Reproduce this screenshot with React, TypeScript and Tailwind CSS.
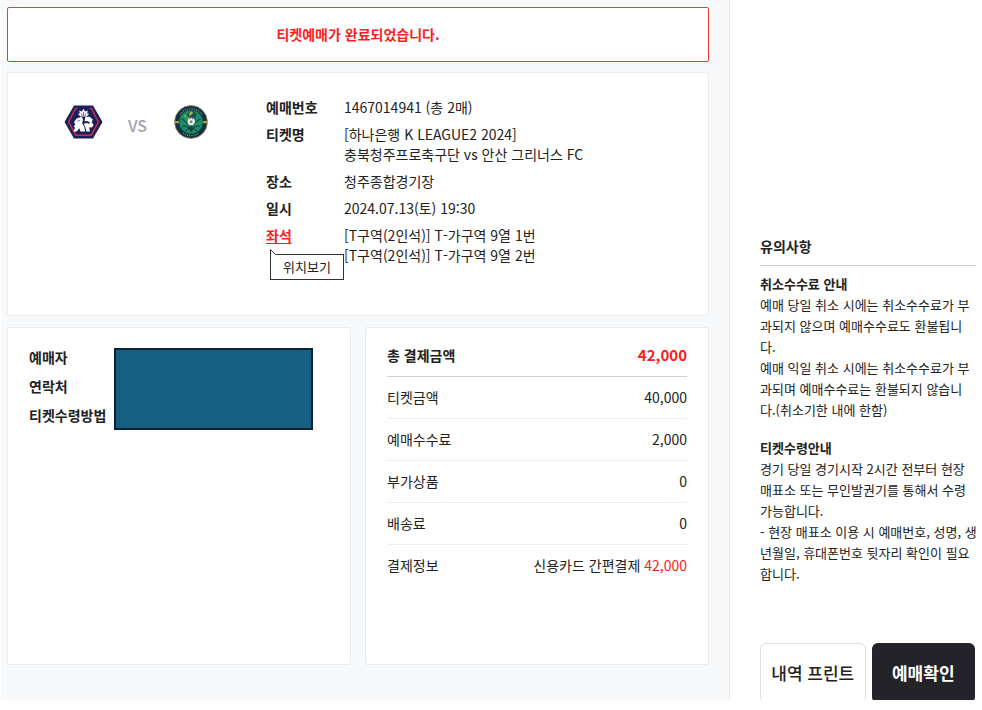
import React from 'react';

const bookingInfo = [
  { label: '예매번호', lines: ['1467014941 (총 2매)'] },
  { label: '티켓명', lines: ['[하나은행 K LEAGUE2 2024]', '충북청주프로축구단 vs 안산 그리너스 FC'] },
  { label: '장소', lines: ['청주종합경기장'] },
  { label: '일시', lines: ['2024.07.13(토) 19:30'] },
];

const seats = ['[T구역(2인석)] T-가구역 9열 1번', '[T구역(2인석)] T-가구역 9열 2번'];

const payments = [
  { label: '티켓금액', value: '40,000' },
  { label: '예매수수료', value: '2,000' },
  { label: '부가상품', value: '0' },
  { label: '배송료', value: '0' },
];

const HomeLogo: React.FC = () => (
  <svg className="h-[34px] w-[39px]" viewBox="0 0 39 34" aria-hidden="true">
    <path d="M10 0.5h19l9.500 16.5L29 33.5H10L0.500 17z" fill="#1b2059" />
    <path d="M13.5 3.5h-1.8L4.600 17l7.200 13.200h15.400L34.400 17 27.300 3.500h-1.800" fill="none" stroke="#c4304c" strokeWidth="1.5" />
    {/* crest */}
    <path
      d="M19.500 3.800l1.600 2.800 2.700-1-.6 3 2 .2-2.600 2.600h-6.200l-2.600-2.600 2-.2-.6-3 2.700 1z"
      fill="#f4f5fa"
    />
    {/* left and right heads */}
    <path
      d="M17.800 11.800l1.200 2.600-.8 4.200 2 3.200 1 4.700h-4.600l-1.400-3.300-2.600 3.300H9.400l1.600-3.700-1.200-1.300 1.600-2-1.400-2.300 2.600-3.600z"
      fill="#fff"
    />
    <path
      d="M21.400 11.800h4.200l3.400 3-1.400 1.900 2 3.500-1.800 2.300-2.600-.2.7 4.200h-3.400l-1.200-4.200-1.700-3.600 3.400-.7 2.200 1 .6-1.700-2.700-1.400-2.600.3z"
      fill="#fff"
    />
    <path d="M19.500 7v4M17.200 8.500l1 2.400M21.800 8.500l-1 2.400M13.200 16.200l2.600-.8" fill="none" stroke="#1b2059" strokeWidth="0.6" />
  </svg>
);

const AwayLogo: React.FC = () => (
  <svg className="h-[34px] w-[34px]" viewBox="0 0 34 34" aria-hidden="true">
    <circle cx="17" cy="17" r="16.4" fill="#122f45" stroke="#8f8a52" strokeWidth="0.8" />
    <path d="M6 9.500a13.500 13.500 0 0 1 22 0M9 28a13.500 13.500 0 0 0 16 0" fill="none" stroke="#6f8770" strokeWidth="1.4" strokeDasharray="1.200 1" />
    <path d="M0.800 16h4.500v2.200h-4.500zM28.700 16h4.500v2.200h-4.500z" fill="#b7a33c" />
    <circle cx="17" cy="17" r="11.800" fill="#1b9066" stroke="#1d5a4b" strokeWidth="0.700" />
    <path
      d="M7.500 14c2.500 0 3.500 3.500 6 4.500M26.500 14c-2.500 0-3.500 3.500-6 4.500M8 21.500c3-1.500 4.500 0 7 1.500M26 21.500c-3-1.500-4.500 0-7 1.500M11.500 26l4-3.500M22.500 26l-4-3.500"
      fill="none"
      stroke="#14524d"
      strokeWidth="1.300"
    />
    <path d="M13 10l2.500-3.500 4-.5 3 3-1 4.500h-7.500z" fill="#175350" />
    <path d="M15.500 7.500l2-1.200 1.500 1.200-1.200 2.200-2.800 1zM11 9.500l1.500 1-1 2.200-1.300-1.200zM12.500 15.500l1-3 2-1-1 2.500z" fill="#c0a83e" />
    <circle cx="17.200" cy="16.500" r="4.200" fill="#e9f1ec" stroke="#17444b" strokeWidth="0.800" />
    <path d="M17.200 15.200l1.500 1.100-.6 1.700h-1.800l-.6-1.700zM15 13.400l1.200-.5.6.8-1 .7zM19.300 13.400l-1.200-.5-.6.8 1 .7z" fill="#6d8084" />
    <path d="M15.500 21.500h3.200l.5 3-2.100 3-2.100-3z" fill="#143f49" />
  </svg>
);

const BookingCard: React.FC = () => (
  <section className="flex min-h-[244px] rounded-xs border border-[#eaecee] bg-white pt-6 pb-8">
    <div className="flex w-[258px] shrink-0 items-start pt-2 pl-14">
      <HomeLogo />
      <span className="mt-[10px] ml-[25px] text-base leading-5 font-medium text-[#9ea3ad]">VS</span>
      <div className="ml-[27px]">
        <AwayLogo />
      </div>
    </div>
    <dl className="flex min-w-0 flex-1 flex-col gap-[7px] leading-5">
      {bookingInfo.map((item) => (
        <div key={item.label} className="flex">
          <dt className="w-[78px] shrink-0 font-bold">{item.label}</dt>
          <dd>
            {item.lines.map((line) => (
              <p key={line}>{line}</p>
            ))}
          </dd>
        </div>
      ))}
      <div className="flex">
        <dt className="relative w-[78px] shrink-0 font-bold">
          <a href="#seat" className="text-[#fb1d22] underline underline-offset-2">좌석</a>
          <div className="absolute top-6 left-1 z-10">
            <svg className="relative z-10 block h-[6px] w-[7px]" viewBox="0 0 7 6" aria-hidden="true">
              <path d="M0 0v6h7z" fill="#fff" />
              <path d="M0.500 6V0.500L6 6" fill="none" stroke="#333" />
            </svg>
            <a
              href="#location"
              className="-mt-px block border border-[#333] bg-white px-3 py-[2px] text-[13px] leading-5 font-normal whitespace-nowrap"
            >
              위치보기
            </a>
          </div>
        </dt>
        <dd>
          {seats.map((seat) => (
            <p key={seat}>{seat}</p>
          ))}
        </dd>
      </div>
    </dl>
  </section>
);

const BuyerCard: React.FC = () => (
  <section className="flex min-h-[338px] flex-1 items-start rounded-xs border border-[#eaecee] bg-white px-[21px] pt-5">
    <ul className="-mt-[5px] w-[80px] shrink-0 leading-[29px] font-bold whitespace-nowrap">
      <li>예매자</li>
      <li>연락처</li>
      <li>티켓수령방법</li>
    </ul>
    <div className="ml-[5px] h-[82px] w-[199px] border-2 border-[#042433] bg-[#156082]" />
  </section>
);

const PaymentCard: React.FC = () => (
  <section className="min-h-[338px] flex-1 rounded-xs border border-[#eaecee] bg-white px-[21px] pt-[6px]">
    <table className="w-full border-collapse">
      <thead>
        <tr className="h-[42px] border-b border-[#cfd1d6]">
          <th scope="row" className="text-left font-bold">총 결제금액</th>
          <td className="text-right text-[15px] font-bold text-[#fb1d22]">42,000</td>
        </tr>
      </thead>
      <tbody>
        {payments.map((item) => (
          <tr key={item.label} className="h-[42px] border-b border-[#eeeff3]">
            <th scope="row" className="text-left font-normal">{item.label}</th>
            <td className="text-right">{item.value}</td>
          </tr>
        ))}
        <tr className="h-[42px]">
          <th scope="row" className="text-left font-normal">결제정보</th>
          <td className="text-right">
            신용카드 간편결제 <span className="text-[#fb1d22]">42,000</span>
          </td>
        </tr>
      </tbody>
    </table>
  </section>
);

const Notice: React.FC = () => (
  <aside className="flex w-[252px] shrink-0 flex-col pr-[6px] pl-[30px]">
    <h2 className="mt-[236px] border-b border-[#cfcfcf] pb-2 leading-[21px] font-bold">유의사항</h2>
    <div className="mt-[7px] text-[13px] leading-[21px] whitespace-nowrap">
      <h3 className="font-bold">취소수수료 안내</h3>
      <p>
        예매 당일 취소 시에는 취소수수료가 부<br />
        과되지 않으며 예매수수료도 환불됩니<br />
        다.
      </p>
      <p>
        예매 익일 취소 시에는 취소수수료가 부<br />
        과되며 예매수수료는 환불되지 않습니<br />
        다.(취소기한 내에 한함)
      </p>
    </div>
    <div className="mt-[17px] text-[13px] leading-[21px] whitespace-nowrap">
      <h3 className="font-bold">티켓수령안내</h3>
      <p>
        경기 당일 경기시작 2시간 전부터 현장<br />
        매표소 또는 무인발권기를 통해서 수령<br />
        가능합니다.
      </p>
      <p>
        - 현장 매표소 이용 시 예매번호, 성명, 생<br />
        년월일, 휴대폰번호 뒷자리 확인이 필요<br />
        합니다.
      </p>
    </div>
    <div className="mt-auto flex h-[57px] gap-[6px] overflow-hidden pr-px text-[17px] whitespace-nowrap">
      <button type="button" className="h-[60px] flex-1 rounded-md border border-[#dedede] bg-white font-medium">
        내역 프린트
      </button>
      <button type="button" className="h-[60px] flex-1 rounded-md bg-[#242329] font-bold text-white">
        예매확인
      </button>
    </div>
  </aside>
);

const App: React.FC = () => {
  return (
    <div lang="ko" className="flex bg-white pl-px font-['Noto_Sans_CJK_KR',sans-serif] text-sm text-[#222]">
      <main className="min-w-0 flex-1 border-r border-[#e8eaed] bg-[#f8f9fb] pt-[7px] pr-5 pb-[35px] pl-[6px]">
        <p className="rounded-xs border border-[#f23a3e] bg-white py-4 text-center leading-[21px] font-bold text-[#fb1d22]">
          티켓예매가 완료되었습니다.
        </p>
        <div className="mt-[10px]">
          <BookingCard />
        </div>
        <div className="mt-[11px] flex gap-[14px]">
          <BuyerCard />
          <PaymentCard />
        </div>
      </main>
      <Notice />
    </div>
  );
};

export default App;
